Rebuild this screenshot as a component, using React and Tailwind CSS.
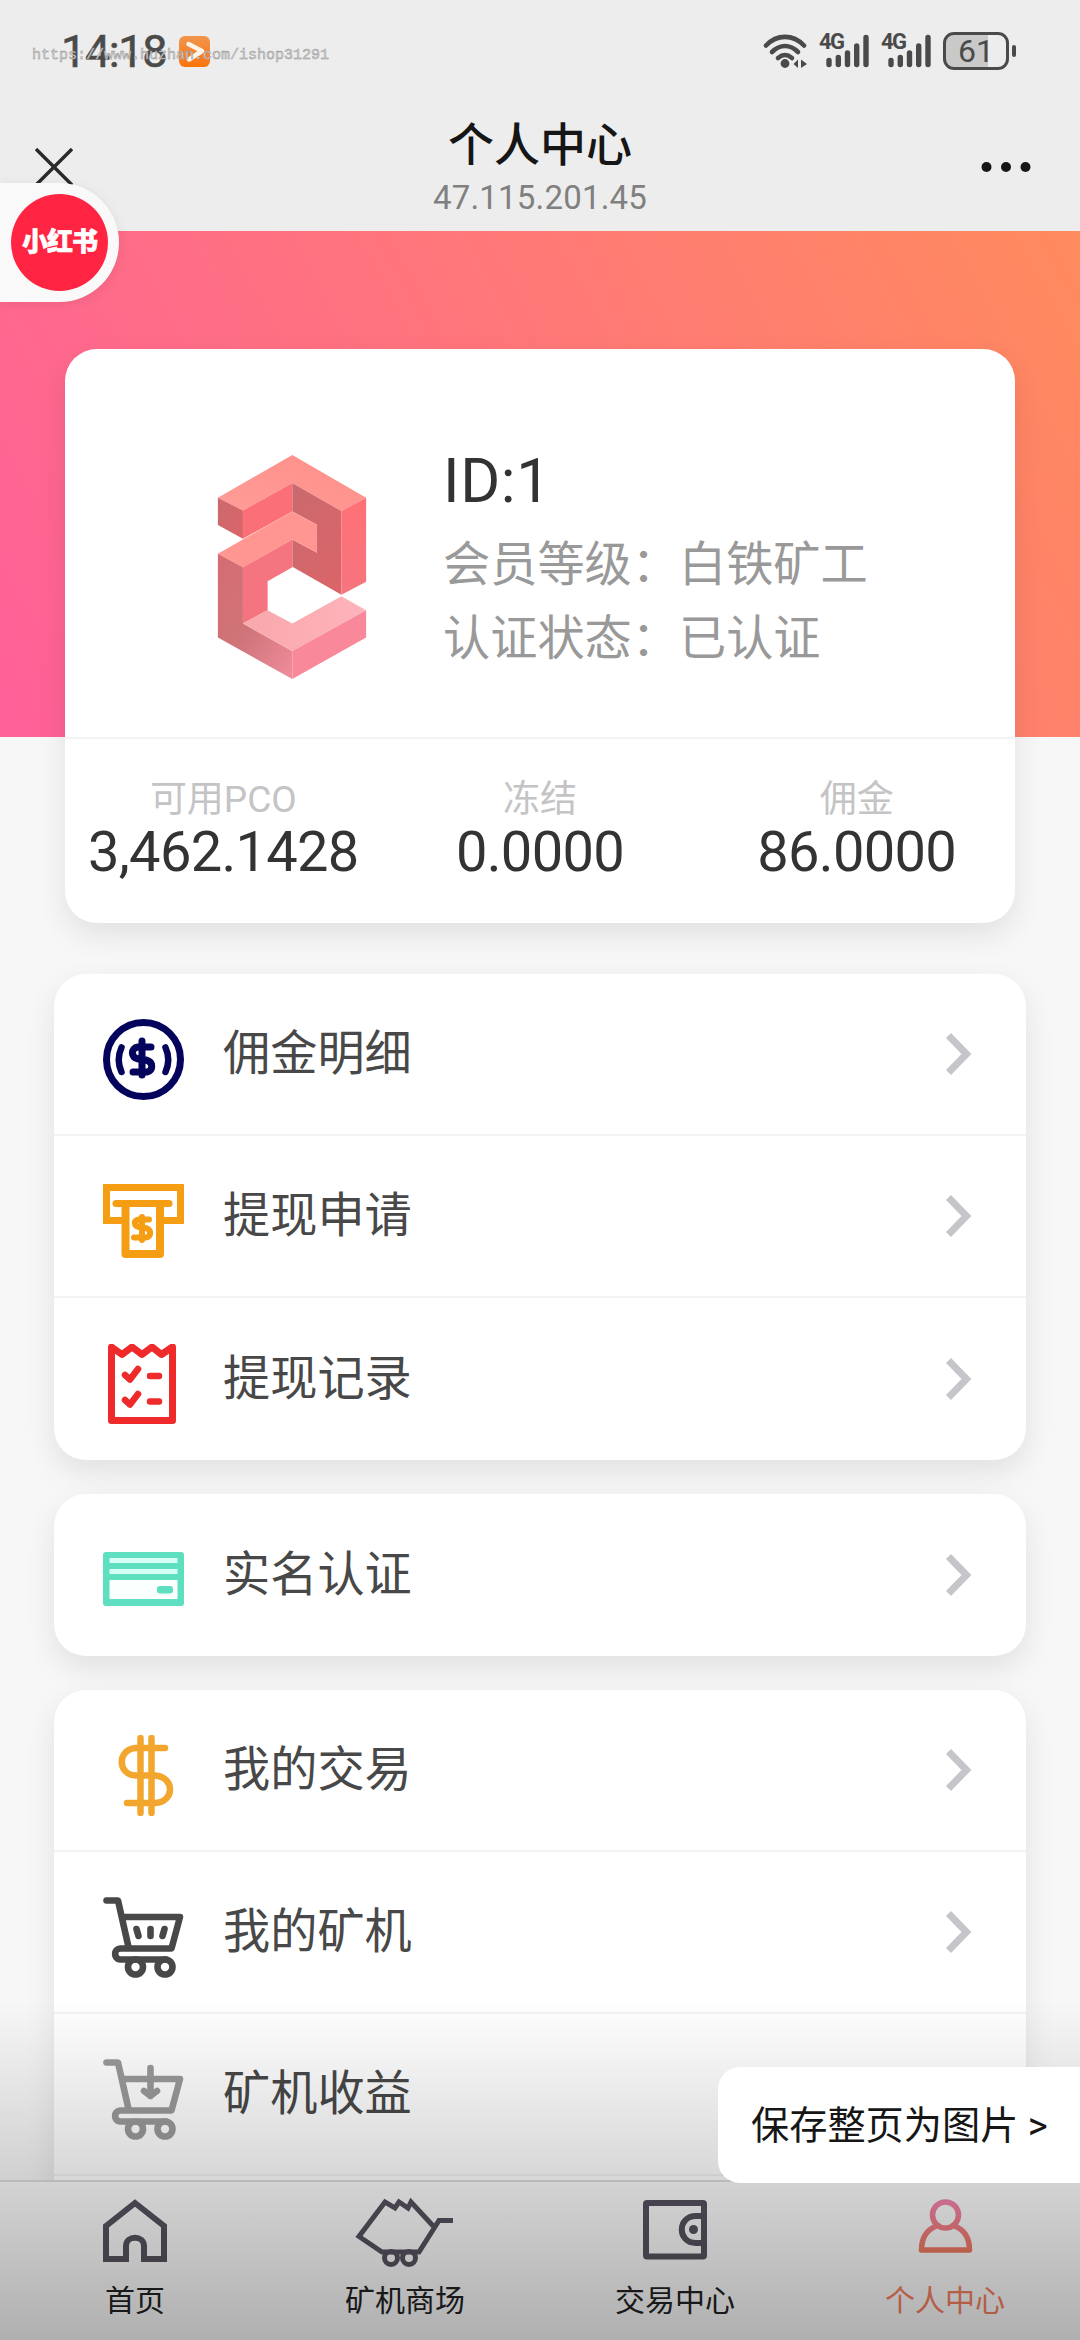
import React from 'react'

const WifiIcon = () => (
  <svg className="w-[46px] h-[36px]" viewBox="0 0 46 36" fill="none" stroke="#4a4a4a" strokeWidth="4.6" strokeLinecap="round">
    <path d="M3 12.5C14 1 30 1 41 12.5" />
    <path d="M9 19C17 11 27 11 35 19" />
    <path d="M15 25C20 21 24 21 29 25" />
    <circle cx="22" cy="30.5" r="4.4" fill="#4a4a4a" stroke="none" />
    <path d="M30.500 31L35 26.500V35Z M44 31L38 26.500V35Z" fill="#4a4a4a" stroke="none" />
  </svg>
)

const Signal = () => (
  <div className="relative w-[50px] h-[36px]">
    <span className="absolute left-0 top-0 text-[22px] leading-[18px] font-bold tracking-[-1.5px] text-[#4a4a4a]">4G</span>
    <svg className="w-[50px] h-[36px]" viewBox="0 0 50 36" stroke="#4a4a4a" strokeWidth="5.4" strokeLinecap="round">
      <path d="M10 27.500V31.500M19.300 24.500V31.500M28.500 20V31.500M37.700 13V31.500M47 4.500V31.500" />
    </svg>
  </div>
)

const StatusBar = () => (
  <div className="flex h-[102px] items-center pl-[61px] pr-[64px] text-[#4a4a4a]">
    <span className="w-[118px] text-[45px] leading-none tracking-[-1.4px] [-webkit-text-stroke:0.6px_#4a4a4a]">14:18</span>
    <span className="flex w-[31px] h-[31px] rounded-[6px] bg-gradient-to-b from-[#f0954a] to-[#fb7400]">
      <svg viewBox="0 0 31 31" fill="none" stroke="#fff5e8" strokeWidth="4.5" strokeLinecap="round" strokeLinejoin="round">
        <path d="M9.500 8L23 15L10 23.500" />
      </svg>
    </span>
    <div className="ml-auto flex items-center">
      <WifiIcon />
      <div className="ml-[10px]"><Signal /></div>
      <div className="ml-[12px]"><Signal /></div>
      <div className="ml-[12px] flex w-[66px] h-[38px] items-center justify-center rounded-[11px] border-[3px] border-[#4a4a4a] bg-[linear-gradient(90deg,#c9c9c9_70%,#ededed_70%)] text-[32px] leading-none">
        61
      </div>
      <div className="ml-[3px] w-[4px] h-[12px] rounded-full bg-[#4a4a4a]" />
    </div>
  </div>
)

const Header = () => (
  <header className="h-[231px] bg-[#ededed]">
    <StatusBar />
    <div className="grid h-[129px] grid-cols-[1fr_auto_1fr] items-center pl-[35px] pr-[35px]">
      <svg className="w-[38px] h-[38px]" viewBox="0 0 38 38" stroke="#2a2a2a" strokeWidth="3.4">
        <path d="M1 1L37 37M37 1L1 37" />
      </svg>
      <div className="text-center">
        <h1 className="text-[46px] leading-[59px] font-medium text-[#161616]">个人中心</h1>
        <p className="mt-[2px] text-[33px] leading-[41px] tracking-[0.2px] text-[#808080]">47.115.201.45</p>
      </div>
      <svg className="mr-[14px] w-[50px] h-[12px] justify-self-end" viewBox="0 0 50 12" fill="#161616">
        <circle cx="5.500" cy="6" r="5" />
        <circle cx="25" cy="6" r="5" />
        <circle cx="44.500" cy="6" r="5" />
      </svg>
    </div>
  </header>
)

const Logo = () => (
  <svg className="w-[150px] h-[224px]" viewBox="112 75 446 671">
    <defs>
      <linearGradient id="top" x1="0" y1="1" x2="1" y2="0">
        <stop offset="0" stopColor="#ff9c98" />
        <stop offset="1" stopColor="#ff8e87" />
      </linearGradient>
      <linearGradient id="shade" x1="0" y1="0" x2="1" y2="1">
        <stop offset="0" stopColor="#c96a6e" />
        <stop offset="1" stopColor="#dc6468" />
      </linearGradient>
      <linearGradient id="left" x1="0" y1="0" x2="1" y2="1">
        <stop offset="0" stopColor="#d56c72" />
        <stop offset="0.5" stopColor="#cf7478" />
        <stop offset="1" stopColor="#f08d9c" />
      </linearGradient>
      <linearGradient id="right" x1="0" y1="0" x2="0" y2="1">
        <stop offset="0" stopColor="#ff7076" />
        <stop offset="1" stopColor="#f6757e" />
      </linearGradient>
      <linearGradient id="floor" x1="0" y1="0" x2="1" y2="0">
        <stop offset="0" stopColor="#f9a8ac" />
        <stop offset="1" stopColor="#ffb3bb" />
      </linearGradient>
    </defs>
    <path d="M336 75L557 203L483 243L336 159L188 241L113 203Z" fill="url(#top)" />
    <path d="M113 203L188 241V326L113 285Z" fill="url(#shade)" />
    <path d="M188 241L336 159V244L188 326Z" fill="#fb7078" />
    <path d="M336 159L483 243V494L336 410V328L410 368V284L336 244Z" fill="url(#shade)" />
    <path d="M483 243L557 203V455L483 494Z" fill="url(#right)" />
    <path d="M336 244L410 284V368L336 328L188 411L113 371Z" fill="#ff9691" />
    <path d="M188 411L336 328V411L262 453V540L188 580Z" fill="#f4747f" />
    <path d="M113 371L188 411V580L336 662V746L113 622Z" fill="url(#left)" />
    <path d="M188 580L262 540L336 580L483 498L557 540L336 662Z" fill="url(#floor)" />
    <path d="M336 662L557 540V622L336 746Z" fill="#f9899a" />
  </svg>
)

const stats = [
  {label: '可用PCO', value: '3,462.1428'},
  {label: '冻结', value: '0.0000'},
  {label: '佣金', value: '86.0000'},
]

const ProfileCard = () => (
  <section className="relative mx-[65px] -mt-[388px] h-[574px] rounded-[32px] bg-white shadow-[0_12px_30px_rgba(0,0,0,0.09)]">
    <div className="flex h-[388px] pl-[152px] pt-[106px]">
      <Logo />
      <div className="ml-[76px] -mt-[12px]">
        <div className="text-[61px] leading-[76px] tracking-[0.6px] text-[#333]">ID:1</div>
        <div className="mt-[9px] text-[47.2px] leading-[75px] text-[#999]">会员等级：白铁矿工</div>
        <div className="-mt-px text-[47.2px] leading-[75px] text-[#999]">认证状态：已认证</div>
      </div>
    </div>
    <div className="grid grid-cols-3 border-t-2 border-[#f3f3f5] pt-[37px] text-center">
      {stats.map((item) => (
        <div key={item.label}>
          <div className="text-[37px] leading-[48px] text-[#c4c4c6]">{item.label}</div>
          <div className="text-[56px] leading-[57px] tracking-[-0.7px] text-[#333]">{item.value}</div>
        </div>
      ))}
    </div>
  </section>
)

const CoinIcon = () => (
  <svg className="size-full" viewBox="0 0 81 81" fill="none" stroke="#04045c" strokeLinecap="round">
    <circle cx="40.500" cy="40.500" r="37" strokeWidth="7" />
    <path d="M48 28H35C27 29 28 39 35 40L43 41C51 43 50 52 44 53H30M39 22V56" strokeWidth="7" />
    <path d="M18.500 28.500Q13 40.500 18.500 53M62.500 28.500Q68 40.500 62.500 53" strokeWidth="6.500" />
  </svg>
)

const AtmIcon = () => (
  <svg className="size-full" viewBox="0 0 81 81" fill="none" stroke="#f59e14" strokeLinecap="round" strokeLinejoin="round">
    <path d="M23 39.500H3.500V6.500H77.500V39.500H57" strokeWidth="7" strokeLinecap="butt" strokeLinejoin="miter" />
    <path d="M13 22.500H66" strokeWidth="7" />
    <path d="M22.500 23V73H57V23" strokeWidth="8" />
    <path d="M46 38.500H36C30 39 31 45 36 46L43 47C49 49 48 56 43 56.500H31M39 36V59" strokeWidth="6" />
  </svg>
)

const ReceiptIcon = () => (
  <svg className="size-full" viewBox="0 0 81 81" fill="none" stroke="#ee2a2a" strokeLinecap="round" strokeLinejoin="round">
    <path d="M8.500 3V76.500H69.500V3L58.500 10.500L49 3L39 10.500L29 3L19 10.500Z" strokeWidth="7" />
    <path d="M22 31L27 35.500L35 25M22 56L27 60.500L35 50M47 32H56M47 57.500H56" strokeWidth="6.500" />
  </svg>
)

const BankCardIcon = () => (
  <svg className="size-full" viewBox="0 0 81 81">
    <rect y="12" width="81" height="54" rx="3" fill="#5ddfc0" />
    <path d="M6.500 18H74.500V23H6.500Z M6.500 29H74.500V34H6.500Z" fill="#d6fff5" />
    <path d="M6.500 40H74.500V59H6.500Z" fill="#fbfffe" />
    <rect x="54" y="46" width="16" height="7.500" rx="3" fill="#5ddfc0" />
  </svg>
)

const DollarIcon = () => (
  <svg className="size-full" viewBox="0 0 81 81" fill="none" stroke="#f3a62d" strokeWidth="6.500" strokeLinecap="round">
    <path d="M62 13H33C14 14 14 40 33 40.500H52C72 42 72 67 52 68H24" />
    <path d="M37.500 3V78M48.500 3V78" />
  </svg>
)

const CartIcon = ({color, down = false}) => (
  <svg className="size-full" viewBox="0 0 81 81" fill="none" stroke={color} strokeWidth="6.600" strokeLinecap="round" strokeLinejoin="round">
    <path d="M3.500 3.500H15L25.500 50M19 20H77L68.500 51.500H17C10.500 52 10.500 62 17 62.500H63" />
    <circle cx="32.500" cy="70" r="7.500" />
    <circle cx="62" cy="70" r="7.500" />
    {down ? (
      <path d="M47.500 9V37M41 32L47.500 37L54 32" />
    ) : (
      <path d="M33.500 32L35.500 39M47.500 32V39M61.500 32L59.500 39" />
    )}
  </svg>
)

const groups = [
  [
    {label: '佣金明细', icon: <CoinIcon />},
    {label: '提现申请', icon: <AtmIcon />},
    {label: '提现记录', icon: <ReceiptIcon />},
  ],
  [{label: '实名认证', icon: <BankCardIcon />}],
  [
    {label: '我的交易', icon: <DollarIcon />},
    {label: '我的矿机', icon: <CartIcon color="#484848" />},
    {label: '矿机收益', icon: <CartIcon color="#9a9a9a" down />},
  ],
]

const MenuRow = ({item}) => (
  <div className="flex h-[162px] items-center pl-[49px] pr-[53px]">
    <div className="mt-[10px] size-[81px]">{item.icon}</div>
    <span className="ml-[39px] text-[47.2px] leading-[60px] text-[#484848]">{item.label}</span>
    <svg className="ml-auto w-[28px] h-[44px]" viewBox="0 0 28 44" fill="none" stroke="#c5c5ca" strokeWidth="7">
      <path d="M3.500 3.500L21.500 22L3.500 40.500" />
    </svg>
  </div>
)

const HomeIcon = () => (
  <svg className="h-[66px] w-[66px]" viewBox="0 0 66 66" fill="none" stroke="#56525f" strokeWidth="6">
    <path d="M4 28L33 5L62 28V61H42V48C42 37 24 37 24 48V61H4Z" />
  </svg>
)

const MineIcon = () => (
  <svg className="h-[70px] w-[100px]" viewBox="0 0 100 70" fill="none" stroke="#56525f" strokeWidth="5">
    <path d="M98 22.500H84L64 54H27L4 38.500L30 4L40 10L44 4L53 10L56 4L80 30" />
    <circle cx="36" cy="60" r="6.500" />
    <circle cx="54" cy="60" r="6.500" />
  </svg>
)

const WalletIcon = () => (
  <svg className="h-[66px] w-[66px]" viewBox="0 0 66 66" fill="none" stroke="#56525f" strokeWidth="6">
    <rect x="4" y="5" width="58" height="53.500" rx="1" />
    <path d="M62 18H54C35 18 35 45 54 45H62" />
    <circle cx="51.500" cy="31.500" r="4.500" fill="#56525f" stroke="none" />
  </svg>
)

const UserIcon = () => (
  <svg className="h-[66px] w-[66px]" viewBox="0 0 66 66" fill="none" stroke="url(#user)" strokeWidth="5.500" strokeLinejoin="round">
    <defs>
      <linearGradient id="user" gradientUnits="userSpaceOnUse" x1="0" y1="0" x2="0" y2="58">
        <stop offset="0" stopColor="#f583b4" />
        <stop offset="1" stopColor="#ee7a58" />
      </linearGradient>
    </defs>
    <circle cx="33.500" cy="17" r="13" />
    <path d="M24.500 28C14 32 9.500 40 9.500 52H57.500C57.500 40 53 32 42.500 28" />
  </svg>
)

const tabs = [
  {label: '首页', icon: <HomeIcon />},
  {label: '矿机商场', icon: <MineIcon />},
  {label: '交易中心', icon: <WalletIcon />},
  {label: '个人中心', icon: <UserIcon />, active: true},
]

const TabBar = () => (
  <nav className="grid h-[160px] shrink-0 grid-cols-4 border-t-2 border-[#dcdcdc] bg-[#fbfbfc]">
    {tabs.map((tab) => (
      <div key={tab.label} className="flex flex-col items-center pt-[16px]">
        <div className="h-[70px]">{tab.icon}</div>
        <span className={`mt-[13px] text-[30px] leading-[40px] ${tab.active ? 'text-[#f5805f]' : 'text-[#222]'}`}>
          {tab.label}
        </span>
      </div>
    ))}
  </nav>
)

const App = () => {
  return (
    <div className="relative flex h-[2340px] w-[1080px] flex-col overflow-hidden bg-[#f7f7f8] font-['Roboto','Noto_Sans_CJK_SC',sans-serif]">
      <Header />
      <main className="min-h-0 flex-1 overflow-hidden">
        <div className="h-[506px] bg-[linear-gradient(62deg,#ff6099,#ff8b5e)]" />
        <ProfileCard />
        <div className="mx-[54px] mt-[51px] flex flex-col gap-[34px]">
          {groups.map((rows, i) => (
            <section key={i} className="divide-y-2 divide-[#f3f3f4] rounded-[32px] bg-white shadow-[0_12px_30px_rgba(0,0,0,0.09)]">
              {rows.map((item) => (
                <MenuRow key={item.label} item={item} />
              ))}
              {i === groups.length - 1 && <div className="h-[162px]" />}
            </section>
          ))}
        </div>
      </main>
      <TabBar />

      <div className="pointer-events-none absolute inset-x-0 bottom-0 h-[340px] bg-gradient-to-b from-black/0 to-black/30" />

      <button className="absolute right-0 top-[2067px] h-[116px] w-[362px] rounded-l-[22px] bg-white pl-[33px] text-left text-[38.2px] leading-[118px] text-[#161616]">
        保存整页为图片 &gt;
      </button>

      <div className="absolute left-0 top-[183px] flex h-[119px] w-[119px] items-center justify-end rounded-r-full bg-[#f9f9f9] pr-[11px] shadow-[0_2px_12px_rgba(0,0,0,0.08)]">
        <div className="flex size-[97px] items-center justify-center rounded-full bg-[#ff2442] text-[26px] font-black tracking-[-1px] text-white [-webkit-text-stroke:0.6px_#fff]">
          小红书
        </div>
      </div>

      <span className="absolute left-[32px] top-[47px] font-['Liberation_Mono',monospace] text-[15px] leading-[18px] text-[#dcdcdc] [-webkit-text-stroke:0.5px_#949494]">
        https://www.huzhan.com/ishop31291
      </span>
    </div>
  )
}

export default App
